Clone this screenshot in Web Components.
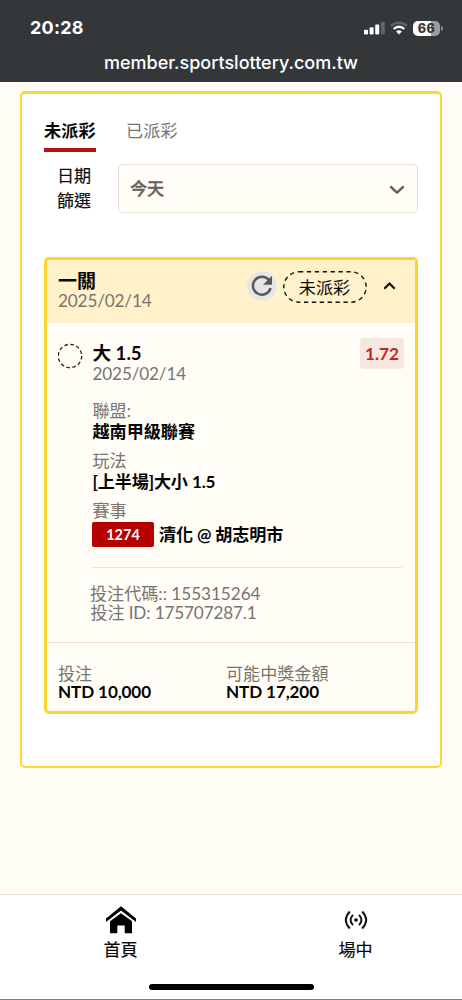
<!DOCTYPE html>
<html lang="zh-Hant">
<head>
<meta charset="utf-8">
<title>投注紀錄</title>
<style>
html,body{margin:0;padding:0}
body{font-family:Lato,"Noto Sans CJK TC",sans-serif;font-size:17.1px;line-height:20px;color:#0b0b0b;background:#fffdf5}
</style>
</head>
<body>
<lottery-app></lottery-app>
<script>
const define=(name,html)=>{
  const t=document.createElement('template');
  t.innerHTML=html;
  customElements.define(name,class extends HTMLElement{
    constructor(){super();this.attachShadow({mode:'open'}).appendChild(t.content.cloneNode(true));}
  });
};

define('status-bar',`<style>
:host{display:block;height:82px;background:#34373a;color:#fff;font-family:Inter,sans-serif}
.top{display:flex;justify-content:space-between;align-items:center;height:20px;padding:18px 19px 0 30px}
.time{font-size:18px;font-weight:700;letter-spacing:.25px}
.url{height:24px;line-height:24px;margin-top:13px;text-align:center;font-size:18px;font-weight:500;letter-spacing:0}
.icons{display:flex;align-items:center;gap:5px}
svg{display:block}
.batt{display:grid;place-items:center;width:27px;height:15px;border-radius:5px;background:linear-gradient(90deg,#fff 66%,#9c9d9f 66%);color:#34373a;font-size:12.5px;font-weight:800;line-height:15px;letter-spacing:.5px}
.cap{width:2px;height:5px;border-radius:0 2px 2px 0;background:#85878a;margin-left:-4px}
</style>
<div class="top"><span class="time">20:28</span>
<div class="icons">
<svg width="21" height="14" viewBox="0 0 21 14"><g fill="#fff"><rect y="8.7" width="4" height="4.8" rx="1"/><rect x="5.6" y="6.3" width="4" height="7.2" rx="1"/><rect x="11.2" y="3.5" width="4" height="10" rx="1"/></g><rect x="16.8" y="0.8" width="4" height="12.7" rx="1" fill="#626568"/></svg>
<svg width="18" height="14" viewBox="0 0 18 14"><g fill="none" stroke-width="2.3"><path d="M1 5.1C5.6.6 12.4.6 17 5.1" stroke="#626568"/><path d="M3.7 8C6.8 5 11.2 5 14.3 8" stroke="#fff"/></g><path d="M6.1 10.5Q9 8 11.9 10.5L9 13.4Z" fill="#fff"/></svg>
<span class="batt">66</span><span class="cap"></span>
</div></div>
<div class="url">member.sportslottery.com.tw</div>`);

define('tab-item',`<style>
:host{display:block;width:52px;height:33px;box-sizing:border-box;padding-top:1px;color:#757575;letter-spacing:.2px;white-space:nowrap}
:host([selected]){color:#0b0b0b;font-weight:700;height:32px;border-bottom:4px solid #b91016}
</style><slot></slot>`);

define('select-box',`<style>
:host{display:flex;box-sizing:border-box;width:300px;height:49px;border:1px solid #e5e1d9;border-radius:5px;background:#fffdf5;padding:0 12px 0 11px;align-items:center;justify-content:space-between;color:#63625e;font-weight:500}
span{-webkit-text-stroke:.35px currentColor}
svg{margin-top:2px}
</style><span><slot></slot></span>
<svg width="16" height="10" viewBox="0 0 16 10"><path d="M2 2l6 5.6L14 2" fill="none" stroke="#63625e" stroke-width="2.4" stroke-linecap="round" stroke-linejoin="round"/></svg>`);

define('text-line',`<style>
:host{display:block;height:20px;line-height:20px;white-space:nowrap}
:host([muted]){color:#767571}
:host([strong]){font-weight:700;color:#050505}
:host([tight]){letter-spacing:-.12px}
</style><slot></slot>`);

define('status-pill',`<style>
:host{display:grid;width:84px;height:32px}
svg,span{grid-area:1/1}
span{place-self:center;line-height:20px;padding-top:1px}
</style><svg width="84" height="32"><rect x=".8" y=".8" width="82.4" height="30.4" rx="15.2" fill="none" stroke="#111" stroke-width="1.4" stroke-dasharray="4.3 3.6"/></svg><span><slot></slot></span>`);

define('refresh-button',`<style>
:host{display:block;width:30px;height:30px}svg{display:block}
</style><svg width="30" height="30" viewBox="0 0 30 30"><circle cx="15" cy="15" r="14.7" fill="#e6e6e8"/><path d="M22.4 9.6A9 9 0 1 0 23.6 17.2" fill="none" stroke="#58585a" stroke-width="2.5"/><path d="M25 4.7V13.7H16Z" fill="#58585a"/></svg>`);

define('odds-badge',`<style>
:host{display:block;width:44px;height:31px;line-height:31px;border-radius:4px;background:#f8e7e0;color:#bd2920;text-align:center;font-weight:700;font-size:17.2px}
</style><slot></slot>`);

define('match-code',`<style>
:host{display:block;width:62px;height:25px;line-height:25px;border-radius:2px;background:#b30000;color:#fff;text-align:center;font-weight:700;font-size:14.5px}
</style><slot></slot>`);

define('bet-card',`<style>
:host{display:block;box-sizing:border-box;width:374px;height:457px;border:3px solid #fdd430;border-radius:5px;background:#fffdf5;overflow:hidden}
header{display:flex;height:63px;background:#fff1c9;box-sizing:border-box;padding:10px 19.5px 0 11px}
.title{font-size:19px}
.grow{flex:1}
.names{padding-top:1px}
refresh-button{margin:1px 6px 0 0}
status-pill{margin-top:1px}
.up{margin:11px 0 0 16px}
.bet{display:grid;grid-template-columns:26px 310px;column-gap:8px;padding:20px 0 0 11px}
.head{display:flex;justify-content:space-between;height:58px;margin-top:1px}
.head odds-badge{margin:-6px -2px 0 0}
.bet text-line{position:relative;left:.5px}
.pick{font-size:18.6px}
.head text-line:first-child{margin-top:-1px;margin-bottom:1px}
.match{display:flex;align-items:center;gap:5px}
hr{border:0;margin:20px 0 17px;height:1px;background:#e8e5df}
.ids{margin:-1px 0 0 -2px}
.ids text-line{height:18px}
.ids text-line+text-line{height:19px;padding-top:1px}
footer{display:grid;grid-template-columns:168px 1fr;border-top:1px solid #e5e2dc;margin-top:20px;padding:21px 0 0 11px}
footer text-line{height:18px}
svg{display:block}
</style>
<header><div class="names"><text-line strong class="title">一關</text-line><text-line muted tight>2025/02/14</text-line></div><span class="grow"></span><refresh-button></refresh-button><status-pill>未派彩</status-pill>
<svg class="up" width="13" height="10" viewBox="0 0 13 10"><path d="M1.3 7.8L6.5 2.5l5.2 5.3" fill="none" stroke="#111" stroke-width="2.2"/></svg></header>
<section class="bet">
<svg width="26" height="26"><circle cx="12" cy="13" r="11.7" fill="none" stroke="#222" stroke-width="1.3" stroke-dasharray="3.6 2.52"/></svg>
<div>
<div class="head"><div><text-line strong class="pick">大 1.5</text-line><text-line muted tight>2025/02/14</text-line></div><odds-badge>1.72</odds-badge></div>
<text-line muted style="margin-top:-1px">聯盟:</text-line><text-line strong style="margin-top:1px">越南甲級聯賽</text-line>
<text-line muted style="margin-top:9px">玩法</text-line><text-line strong tight style="margin-top:1px">[上半場]大小 1.5</text-line>
<text-line muted style="margin-top:9px">賽事</text-line>
<div class="match" style="margin-top:1px"><match-code>1274</match-code><text-line strong tight style="padding-top:1px;left:0">清化 @ 胡志明市</text-line></div>
<hr>
<div class="ids"><text-line muted style="left:0">投注代碼:: 155315264</text-line><text-line muted tight>投注 ID: 175707287.1</text-line></div>
</div></section>
<footer><div><text-line muted>投注</text-line><text-line strong tight>NTD 10,000</text-line></div><div><text-line muted>可能中獎金額</text-line><text-line strong tight>NTD 17,200</text-line></div></footer>`);

define('nav-item',`<style>
:host{display:flex;flex-direction:column;align-items:center;color:#080808}
::slotted(svg){display:block;height:30px}
.t{margin-top:4px;-webkit-text-stroke:.2px currentColor}
</style><slot name="icon"></slot><span class="t"><slot></slot></span>`);

define('bottom-nav',`<style>
:host{display:flex;flex-direction:column;box-sizing:border-box;height:106px;border-top:1px solid #e3e3df;border-bottom:1px solid #77797a;background:#fff}
.row{display:grid;grid-template-columns:118px 118px;column-gap:117px;padding:11px 0 0 61.5px;height:78px;box-sizing:border-box}
.home{width:165px;height:6px;border-radius:3px;background:#000;margin:11px 0 0 148.5px}
</style><div class="row">
<nav-item><svg slot="icon" width="30" height="30" viewBox="0 0 30 30"><path d="M0 12.6L15 .2 30 12.6V16L15 4.6 0 16Z"/><path d="M4 15.2L15 7.3 26 15.2V27.3H18.7V19.5H11.3V27.3H4Z"/></svg>首頁</nav-item>
<nav-item><svg slot="icon" width="24" height="30" viewBox="0 0 24 30"><circle cx="12" cy="14" r="1.8"/><g fill="none" stroke="#111" stroke-width="1.9"><path d="M5.8 5.5Q-2.2 14 5.8 22.5M18.2 5.5Q26.2 14 18.2 22.5M9 8.9Q4.1 14 9 19.1M15 8.9Q19.9 14 15 19.1"/></g></svg>場中</nav-item>
</div><div class="home"></div>`);

define('lottery-app',`<style>
:host{display:flex;flex-direction:column;height:1000px;overflow:hidden}
main{flex:1}
.panel{box-sizing:border-box;width:422px;height:677px;margin:9px 0 0 20px;border:2px solid #fdd830;border-top-width:3px;border-radius:5px;background:#fff;padding:26px 22px 0}
.tabs{display:flex;gap:30px;height:44px}
.filter{display:flex;width:374px;justify-content:space-between;height:49px}
.label{width:35px;margin-left:12.5px;line-height:24.5px;text-align:center;-webkit-text-stroke:.15px currentColor}
bet-card{margin-top:44px}
</style>
<status-bar></status-bar>
<main><div class="panel">
<div class="tabs"><tab-item selected>未派彩</tab-item><tab-item>已派彩</tab-item></div>
<div class="filter"><span class="label">日期篩選</span><select-box>今天</select-box></div>
<bet-card></bet-card>
</div></main>
<bottom-nav></bottom-nav>`);
</script>
</body>
</html>
